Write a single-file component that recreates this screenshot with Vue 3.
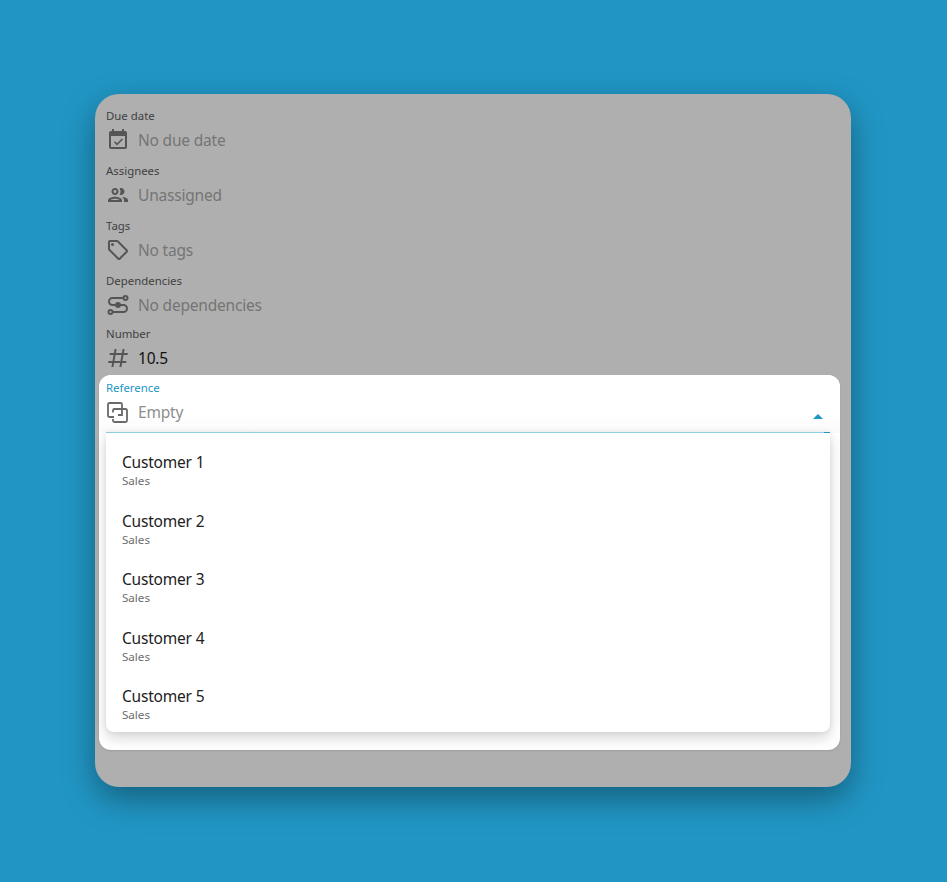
<script setup>
const rows = [
  { label: 'Due date', value: 'No due date', icon: 'M19,19H5V8H19M16,1V3H8V1H6V3H5C3.89,3 3,3.89 3,5V19A2,2 0 0,0 5,21H19A2,2 0 0,0 21,19V5C21,3.89 20.1,3 19,3H18V1M17,11.53L15.94,10.47L11.06,15.35L8.94,13.23L7.88,14.29L11.06,17.47L17,11.53Z' },
  { label: 'Assignees', value: 'Unassigned', icon: 'M9 13.75c-2.34 0-7 1.17-7 3.5V19h14v-1.75c0-2.33-4.66-3.5-7-3.5zM4.34 17c.84-.58 2.87-1.25 4.66-1.25s3.82.67 4.66 1.25H4.34zM9 12c1.93 0 3.5-1.57 3.5-3.5S10.93 5 9 5 5.5 6.57 5.5 8.5 7.07 12 9 12zm0-5c.83 0 1.5.67 1.5 1.5S9.83 10 9 10s-1.5-.67-1.5-1.5S8.17 7 9 7zm7.04 6.81c1.16.84 1.96 1.96 1.96 3.44V19h4v-1.75c0-2.02-3.5-3.17-5.96-3.44zM15 12c1.93 0 3.5-1.57 3.5-3.5S16.93 5 15 5c-.54 0-1.04.13-1.5.35.63.89 1 1.98 1 3.15s-.37 2.26-1 3.15c.46.22.96.35 1.5.35z' },
  { label: 'Tags', value: 'No tags', icon: 'M21.41 11.58l-9-9C12.05 2.22 11.55 2 11 2H4c-1.1 0-2 .9-2 2v7c0 .55.22 1.05.59 1.42l9 9c.36.36.86.58 1.41.58s1.05-.22 1.41-.59l7-7c.37-.36.59-.86.59-1.41s-.23-1.06-.59-1.42zM13 20.01L4 11V4h7v-.01l9 9-7 7.02zM6.5 5a1.5 1.5 0 1 0 0 3 1.5 1.5 0 0 0 0-3z' }
]
const customers = [1, 2, 3, 4, 5].map(n => `Customer ${n}`)
</script>

<template>
  <div class="page">
    <section class="card">
      <div v-for="r in rows" :key="r.label" class="row">
        <div class="label">{{ r.label }}</div>
        <div class="line">
          <svg class="icon" viewBox="0 0 24 24"><path :d="r.icon" /></svg>
          <span class="muted">{{ r.value }}</span>
        </div>
      </div>
      <div class="row">
        <div class="label">Dependencies</div>
        <div class="line">
          <svg class="icon stroke" viewBox="0 0 24 24">
            <path d="M17 5H6.5a3.5 3.5 0 0 0 0 7h11a3.5 3.5 0 0 1 0 7H6.5" />
            <circle cx="19.5" cy="5" r="2" /><circle cx="12" cy="12" r="2" class="solid" /><circle cx="4.5" cy="19" r="2" />
          </svg>
          <span class="muted">No dependencies</span>
        </div>
      </div>
      <div class="row number">
        <div class="label">Number</div>
        <div class="line">
          <svg class="icon" viewBox="0 0 24 24"><path d="M5.41,21L6.12,17H2.12L2.47,15H6.47L7.53,9H3.53L3.88,7H7.88L8.59,3H10.59L9.88,7H15.88L16.59,3H18.59L17.88,7H21.88L21.53,9H17.53L16.47,15H20.47L20.12,17H16.12L15.41,21H13.41L14.12,17H8.12L7.41,21H5.41M9.53,9L8.47,15H14.47L15.53,9H9.53Z" /></svg>
          <span class="value">10.5</span>
        </div>
      </div>
      <div class="panel">
        <div class="field">
          <div class="label accent">Reference</div>
          <div class="line input">
            <svg class="icon stroke thin" viewBox="0 0 24 24">
              <path d="M8 17H3.5A1.5 1.5 0 0 1 2 15.5V4.5A1.5 1.5 0 0 1 3.5 3h11A1.5 1.5 0 0 1 16 4.5V15h-4" />
              <path d="M7 12.5V10.5A1.5 1.5 0 0 1 8.5 9H19.5A1.5 1.5 0 0 1 21 10.5V20.5A1.5 1.5 0 0 1 19.5 22H8.5A1.5 1.5 0 0 1 7 20.5V19" />
            </svg>
            <span class="placeholder">Empty</span>
            <span class="caret"></span>
          </div>
        </div>
        <ul class="menu">
          <li v-for="c in customers" :key="c">
            <div class="name">{{ c }}</div>
            <div class="sub">Sales</div>
          </li>
        </ul>
      </div>
    </section>
  </div>
</template>

<style>
html, body { margin: 0; background: #2196c4; }
</style>

<style scoped>
.page {
  width: 947px; height: 882px; box-sizing: border-box; padding: 94px 95px 0;
  background: #2196c4; font-family: "Noto Sans", sans-serif; overflow: hidden;
}
.card {
  width: 756px; height: 693px; box-sizing: border-box; padding-top: 13px;
  background: #afafaf; border-radius: 24px; box-shadow: 0 12px 32px rgba(0,0,0,.36);
}
.row { height: 55px; padding-left: 11px; }
.row.number { height: 50px; margin-top: -2px; }
.label { height: 17px; font-size: 11.4px; line-height: 17px; color: #3f3f3f; }
.line { display: flex; align-items: center; gap: 8px; height: 28px; margin-top: 1px; }
.icon { width: 24px; height: 24px; fill: #555; flex: none; margin-top: 2px; }
.stroke { fill: none; stroke: #555; stroke-width: 2; }
.stroke .solid { fill: #555; }
.thin { stroke: #6a6a6a; stroke-width: 1.8; margin-top: 0; }
.muted { font-size: 15.5px; letter-spacing: -.2px; color: #757575; padding-top: 2px; }
.value { font-size: 15.5px; letter-spacing: -.2px; color: #111; padding-top: 2px; }
.panel {
  margin: 0 11px 0 4px; height: 375px; box-sizing: border-box; padding: 0 10px 0 7px;
  background: #fff; border-radius: 12px; box-shadow: 0 1px 2px rgba(0,0,0,.1);
}
.field {
  background: linear-gradient(#fff 65%, #fafafa); margin: 0 -10px 0 -7px; padding: 4px 10px 0 7px;
  border-radius: 12px 12px 0 0;
}
.accent { color: #2196c4; }
.input {
  position: relative; height: 37px; margin-top: 0; align-items: flex-start; padding-top: 4px; box-sizing: border-box;
  border-bottom: 1px solid transparent;
  border-image: linear-gradient(90deg, #8fcbe2 99%, #2196c4 99%) 1;
}
.placeholder { font-size: 15.5px; letter-spacing: -.2px; line-height: 24px; color: #8e8e8e; }
.caret {
  position: absolute; right: 7px; top: 18px; width: 0; height: 0;
  border: 5px solid transparent; border-top: 0; border-bottom-color: #2196c4;
}
.menu {
  list-style: none; margin: 0; height: 299px; border-radius: 0 0 8px 8px; background: #fff;
  box-shadow: 0 6px 14px rgba(0,0,0,.16), 0 0 6px rgba(0,0,0,.08);
  padding: 17px 0 0; box-sizing: border-box;
}
.menu li { height: 58.5px; padding-left: 16px; }
.name { font-size: 15.5px; letter-spacing: -.2px; line-height: 24px; color: #212121; }
.sub { font-size: 11.6px; line-height: 14px; color: #6d6d6d; }
</style>
